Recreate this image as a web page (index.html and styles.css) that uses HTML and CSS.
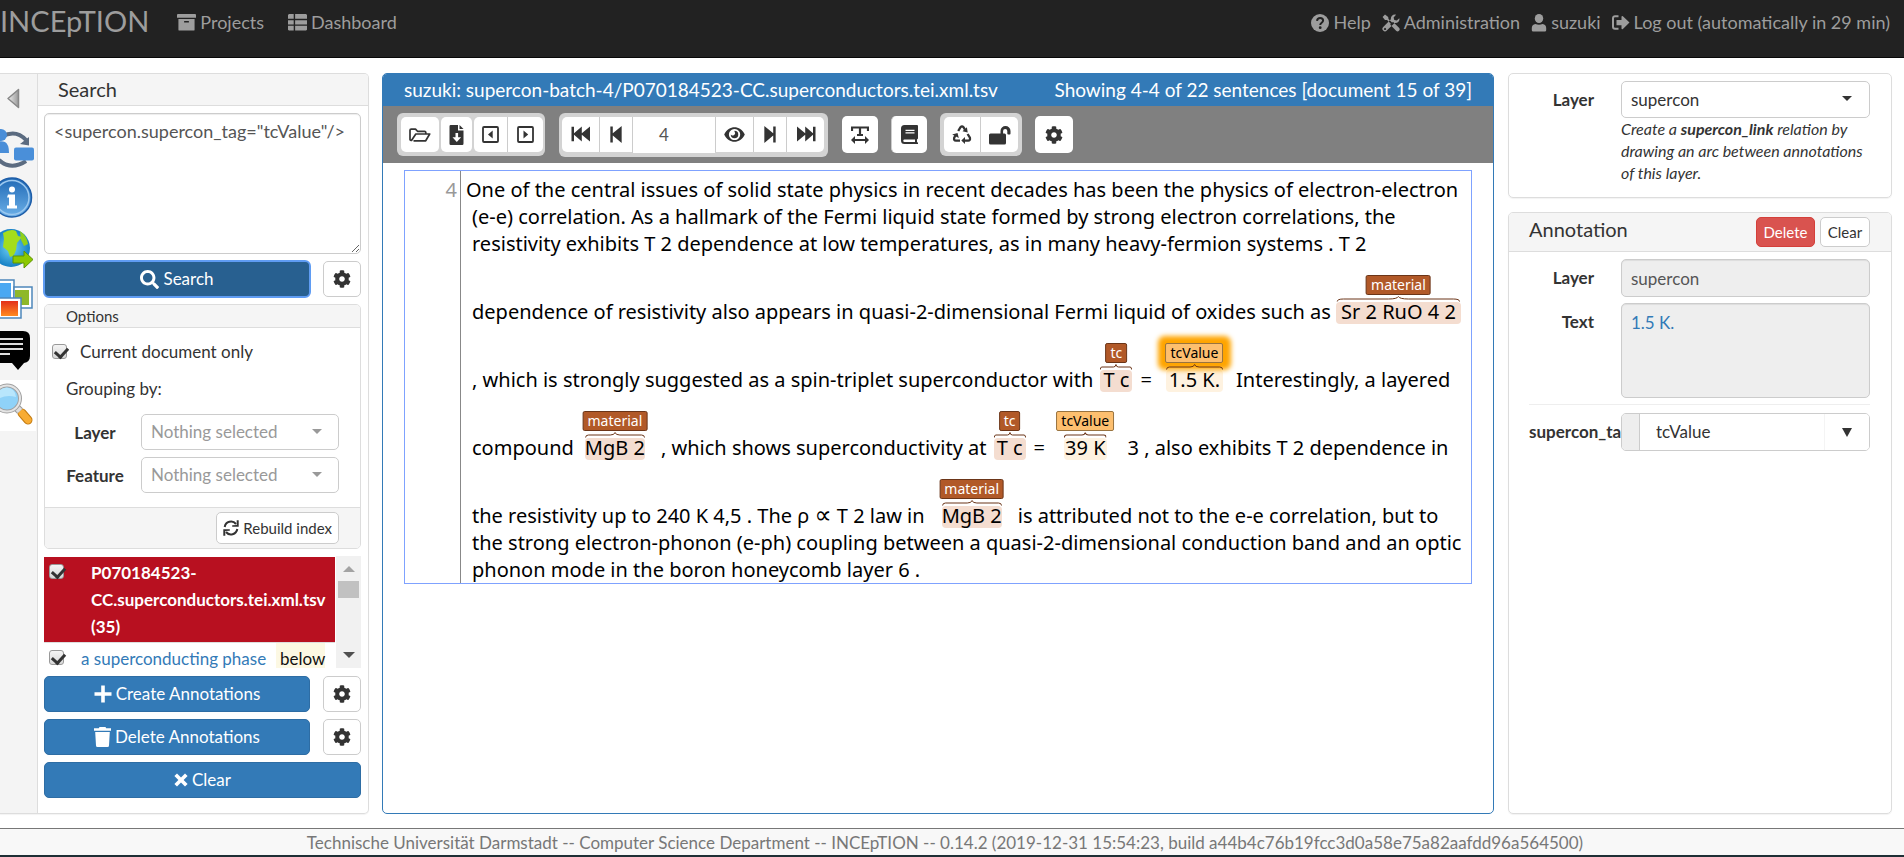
FILE: index.html
```html
<!DOCTYPE html>
<html lang="en">
<head>
<meta charset="utf-8">
<title>INCEpTION</title>
<link rel="stylesheet" href="styles.css">
</head>
<body>
<svg class="sprite" aria-hidden="true">
  <symbol id="cog" viewBox="0 0 512 512"><path d="M487.4 315.7l-42.6-24.6c4.3-23.2 4.3-47 0-70.2l42.6-24.6c4.9-2.8 7.1-8.6 5.5-14-11.1-35.6-30-67.8-54.7-94.6-3.8-4.1-10-5.1-14.8-2.3L380.8 110c-17.9-15.4-38.5-27.3-60.8-35.1V25.8c0-5.6-3.9-10.5-9.4-11.7-36.7-8.2-74.3-7.8-109.2 0-5.5 1.2-9.4 6.1-9.4 11.7V75c-22.2 7.9-42.8 19.8-60.8 35.1L88.7 85.5c-4.9-2.8-11-1.9-14.8 2.3-24.7 26.7-43.6 58.9-54.7 94.6-1.7 5.4.6 11.2 5.5 14L67.3 221c-4.3 23.2-4.3 47 0 70.2l-42.6 24.6c-4.9 2.8-7.1 8.6-5.5 14 11.1 35.6 30 67.8 54.7 94.6 3.8 4.1 10 5.1 14.8 2.3l42.6-24.6c17.9 15.4 38.5 27.3 60.8 35.1v49.2c0 5.6 3.9 10.5 9.4 11.7 36.7 8.2 74.3 7.8 109.2 0 5.5-1.2 9.4-6.1 9.4-11.7v-49.2c22.2-7.9 42.8-19.8 60.8-35.1l42.6 24.6c4.9 2.8 11 1.9 14.8-2.3 24.7-26.7 43.6-58.9 54.7-94.6 1.5-5.5-.7-11.3-5.6-14.1zM256 336c-44.1 0-80-35.9-80-80s35.9-80 80-80 80 35.9 80 80-35.9 80-80 80z"/></symbol>
  <symbol id="search" viewBox="0 0 512 512"><path d="M505 442.7L405.3 343c-4.5-4.5-10.6-7-17-7H372c27.6-35.3 44-79.7 44-128C416 93.1 322.9 0 208 0S0 93.1 0 208s93.1 208 208 208c48.3 0 92.7-16.4 128-44v16.3c0 6.4 2.5 12.5 7 17l99.7 99.7c9.4 9.4 24.6 9.4 33.9 0l28.3-28.3c9.4-9.4 9.4-24.6.1-34zM208 336c-70.7 0-128-57.2-128-128 0-70.7 57.2-128 128-128 70.7 0 128 57.2 128 128 0 70.7-57.2 128-128 128z"/></symbol>
  <symbol id="archive" viewBox="0 0 20 18"><path d="M1 0h18a1 1 0 0 1 1 1v3H0V1a1 1 0 0 1 1-1zM1.500 5.200h17V16.500a1 1 0 0 1-1 1h-15a1 1 0 0 1-1-1zM7.500 7.500v1.500h5V7.500z" fill-rule="evenodd"/></symbol>
  <symbol id="thlist" viewBox="0 0 20 18"><path d="M1 0h5v5H0V1zM7.500 0H19l1 1v4H7.500zM0 6.500h6v4.500H0zM7.500 6.500H20V11H7.500zM0 12.500h6v5H1l-1-1zM7.500 12.500H20v4l-1 1H7.500z"/></symbol>
  <symbol id="help" viewBox="0 0 18 18"><circle cx="9" cy="9" r="9"/><path d="M6 6.800C6.300 4.700 7.500 3.900 9.100 3.900c1.700 0 3 1.100 3 2.600 0 2.200-2.900 2.200-2.900 4.400" fill="none" stroke="#222" stroke-width="2"/><circle cx="9.200" cy="13.700" r="1.400" fill="#222"/></symbol>
  <symbol id="tools" viewBox="0 0 18 18"><path d="M3 .5l3.200 2.400.3 2L10 8.400l1.200-.5 5.800 5.900a1.800 1.800 0 0 1-2.900 2.900l-5.800-5.900.4-1.200L5 6.100 3 5.900.6 2.900zM17.300 4.300L14.800 6.600l-2.500-.7-.7-2.500 2.400-2.700c-3-.7-5.500 1.500-5.100 4.500L1.200 13a2.500 2.500 0 0 0 3.600 3.600L12.600 9c3 .5 5.500-1.900 4.700-4.700zM3 16a1 1 0 1 1 .1 0z" fill-rule="nonzero"/></symbol>
  <symbol id="user" viewBox="0 0 16 20"><ellipse cx="8" cy="5" rx="4.700" ry="5"/><path d="M4 11c2.500 1.200 5.500 1.200 8 0 2.500.3 4 2 4 4.500V18a1.500 1.500 0 0 1-1.500 1.500h-13A1.500 1.500 0 0 1 0 18v-2.500C0 13 1.500 11.300 4 11z"/></symbol>
  <symbol id="logout" viewBox="0 0 18 16"><path d="M6.500 1.200H3A2 2 0 0 0 1 3.200v8.600a2 2 0 0 0 2 2h3.500" fill="none" stroke="currentColor" stroke-width="2"/><path d="M4.500 5v5.200h5V13.500q.2 1.200 1.400.4L17.500 7.600 10.900 1.200Q9.700.5 9.500 1.700V5z"/></symbol>
  <symbol id="plus" viewBox="0 0 18 18"><path d="M7.200.5h3.600v6.700h6.700v3.600h-6.700v6.700H7.200v-6.700H.5V7.200h6.700z"/></symbol>
  <symbol id="trash" viewBox="0 0 17 20"><path d="M5.500 0h6l.7 1.300H17v2.500H0V1.300h4.800zM1.200 5h14.600l-.8 13.500a1.500 1.500 0 0 1-1.500 1.500h-10A1.500 1.500 0 0 1 2 18.500z"/></symbol>
  <symbol id="times" viewBox="0 0 14 14"><path d="M3 .4l4 4 4-4L13.600 3l-4 4 4 4-2.600 2.600-4-4-4 4L.4 11l4-4-4-4z"/></symbol>
  <symbol id="sync" viewBox="0 0 16 16"><path d="M1.700 7A6.400 6.400 0 0 1 13 4M14.300 9A6.400 6.400 0 0 1 3 12" fill="none" stroke="currentColor" stroke-width="2"/><path d="M15.700.3v6.500H9.200v-1.500L13.700 5V.3zM.3 15.700V9.200h6.500v1.500L2.300 11v4.700z"/></symbol>
  <symbol id="folder" viewBox="0 0 22 14"><path d="M4.500 12.800h12.200L20.700 6H6.800L2.500 12.500q-1.300 0-1.500-1V2.300Q1 1.100 2.200 1.100h4.300l2 2.200h7q1.300 0 1.300 1.300V6" fill="none" stroke="currentColor" stroke-width="1.700" stroke-linejoin="round"/></symbol>
  <symbol id="file" viewBox="0 0 14 20"><path d="M0 1.200Q0 0 1.200 0H8.500V5.500H14V18.500Q14 20 12.800 20H1.200Q0 20 0 18.700zM10 0l4 4h-4zM6 8v4.200H3L7.300 17l4.300-4.800h-3V8z" fill-rule="evenodd"/></symbol>
  <symbol id="prevdoc" viewBox="0 0 17 17"><rect x="1" y="1" width="15" height="15" rx="1" fill="none" stroke="currentColor" stroke-width="1.800"/><path d="M10.700 4.500v8L6 8.500z"/></symbol>
  <symbol id="nextdoc" viewBox="0 0 17 17"><rect x="1" y="1" width="15" height="15" rx="1" fill="none" stroke="currentColor" stroke-width="1.800"/><path d="M6.500 4.500v8l4.700-4z"/></symbol>
  <symbol id="first" viewBox="0 0 20 16"><path d="M.5.800H3v6.500L10.800.5v6.800L19 .5v15l-8.200-6.800v6.800L3 8.700v6.500H.5z"/></symbol>
  <symbol id="last" viewBox="0 0 20 16"><path d="M19.500.800H17v6.500L9.200.5v6.800L1 .5v15l8.200-6.800v6.800L17 8.700v6.500h2.500z"/></symbol>
  <symbol id="prev" viewBox="0 0 12 18"><path d="M0 .5h2.600v7.300L12 0v18L2.600 10v7.500H0z"/></symbol>
  <symbol id="next" viewBox="0 0 12 18"><path d="M12 .5H9.400v7.300L0 0v18l9.400-8v7.500H12z"/></symbol>
  <symbol id="eye" viewBox="0 0 22 16"><path d="M0 8C5-2.300 17-2.300 22 8 17 18.300 5 18.300 0 8zM11 2a6 6 0 1 0 .1 0zM11 4a4 4 0 1 1-4 4 2 2 0 0 0 4-3z" fill-rule="evenodd"/></symbol>
  <symbol id="textw" viewBox="0 0 18 18"><path d="M1 5V1.500h16V5M9 1.500v7.300M6 9h6" fill="none" stroke="currentColor" stroke-width="2.200"/><path d="M0 14l4-4v3h10v-3l4 4-4 4v-3H4v3z"/></symbol>
  <symbol id="book" viewBox="0 0 17 19"><path d="M3.500 0H16a1 1 0 0 1 1 1v12.500l-1 1V17l1 .7V19H3.500A3.500 3.500 0 0 1 0 15.500v-12A3.500 3.500 0 0 1 3.500 0zM4.500 4.700V6h9V4.700zM4.500 7.300v1.300h9V7.300zM3.500 14.500a1.100 1.100 0 0 0 0 2.500H14v-2.500z" fill-rule="evenodd"/></symbol>
  <symbol id="recycle" viewBox="0 0 20 19"><path d="M6.200 6L8.500 2.200Q10 .500 11.500 2.200L13 4.800M15.600 9l2.300 3.700Q18.600 15.500 16 15.700H12.500M8 15.700H4Q1.500 15.500 2.200 12.700L3.800 10" fill="none" stroke="currentColor" stroke-width="2.300"/><path d="M14.900 2.200l.8 5.300-5.200-1.200zM13 11.900v7.100L9.300 15.500zM.2 9.500L5.500 8l1.300 5z"/></symbol>
  <symbol id="unlock" viewBox="0 0 22 20"><path d="M2 8.500h9.500V6a5 5 0 0 1 10 0v2.500a1 1 0 0 1-1.200 1h-1a1 1 0 0 1-1-1V6a2.100 2.100 0 0 0-4.200 0V8.500h1.400a1.500 1.500 0 0 1 1.500 1.500v8a1.500 1.500 0 0 1-1.500 1.500H1.500A1.500 1.500 0 0 1 0 18v-8a1.500 1.500 0 0 1 1.500-1.500z"/></symbol>
  <symbol id="brace" viewBox="0 0 100 6" preserveAspectRatio="none"><path d="M1 5.500Q1 3 6 3H42Q49 3 50 .5 51 3 58 3H94Q99 3 99 5.500" fill="none" stroke="currentColor" stroke-width="1" vector-effect="non-scaling-stroke"/></symbol>
</svg>

<nav class="navbar">
  <a class="brand" href="#">INCEpTION</a>
  <a class="nav-link" href="#"><svg class="i20"><use href="#archive"/></svg>Projects</a>
  <a class="nav-link second" href="#"><svg class="i20"><use href="#thlist"/></svg>Dashboard</a>
  <div class="nav-right">
    <a class="nav-link" href="#"><svg class="i18"><use href="#help"/></svg>Help</a>
    <a class="nav-link" href="#"><svg class="i18"><use href="#tools"/></svg>Administration</a>
    <a class="nav-link" href="#"><svg class="i16"><use href="#user"/></svg>suzuki</a>
    <a class="nav-link" href="#"><svg class="i18"><use href="#logout"/></svg>Log out (automatically in 29 min)</a>
  </div>
</nav>

<main class="main">
  <aside class="sidebar">
    <div class="tabs">
      <button class="tab" aria-label="Collapse"><svg width="38" height="50" viewBox="0 0 38 50"><defs><linearGradient id="gg"><stop offset="0" stop-color="#eee"/><stop offset="1" stop-color="#999"/></linearGradient></defs><path d="M8 24.500L18.500 15.500v18z" fill="url(#gg)" stroke="#888" stroke-width="1.500" stroke-linejoin="round"/></svg></button>
      <button class="tab" aria-label="Curation"><svg width="38" height="51" viewBox="0 0 38 51"><path d="M2 11.500Q16 4 26 15M-1 35Q11 46 26 36" fill="none" stroke="#5b6b80" stroke-width="4"/><path d="M29 12v8.500l-9-1.500z" fill="#5b6b80"/><circle cx="1" cy="10" r="6" fill="#4a8ed8"/><path d="M-4 28V18q4-3 9-1 4 2 4 11z" fill="#4a8ed8"/><rect x="14" y="22.500" width="20" height="13" rx="2" fill="#4a8fd9"/></svg></button>
      <button class="tab" aria-label="Info"><svg width="38" height="51" viewBox="0 0 38 51"><defs><linearGradient id="bg" x2="0" y2="1"><stop offset="0" stop-color="#2069b5"/><stop offset="1" stop-color="#6cb0e8"/></linearGradient></defs><circle cx="12" cy="21.500" r="19.500" fill="url(#bg)" stroke="#1d5da8" stroke-width="1.500"/><circle cx="12" cy="21.500" r="17" fill="none" stroke="#9cc8ef" stroke-width="1.500"/><circle cx="12" cy="13.500" r="3" fill="#fff"/><path d="M8 18.500h7v11h2v3H7v-3h2v-8H7z" fill="#fff"/></svg></button>
      <button class="tab" aria-label="Web"><svg width="38" height="51" viewBox="0 0 38 51"><defs><radialGradient id="gl"><stop offset="0" stop-color="#6fd0f5"/><stop offset="1" stop-color="#1680c5"/></radialGradient></defs><circle cx="11" cy="21" r="19" fill="url(#gl)"/><path d="M3 6q8-5 13-2l2 5 4 1-5 6-1 7q-2 7-6 7l-2-6-5-4 1-8z" fill="#a4dd1c"/><path d="M20 4q7 5 8 13l-4 2-3-6z" fill="#8fd01a"/><path d="M13 29h11v-5l9 8.500-9 8.500v-5H13z" fill="#8cc800" stroke="#5e9400"/></svg></button>
      <button class="tab" aria-label="Images"><svg width="38" height="51" viewBox="0 0 38 51"><defs><linearGradient id="rd" x2="0" y2="1"><stop offset="0" stop-color="#e33018"/><stop offset="1" stop-color="#ff8a20"/></linearGradient></defs><g stroke="#4d87bb" stroke-width="1.500"><path d="M-8 2h22v22H-8z" fill="#fff"/><path d="M14 9h18v21H14z" fill="#fff"/></g><path d="M-5 5h16v16H-5z" fill="#4aa8f2"/><path d="M15 12h14v15H15z" fill="#8eb82a"/><path d="M-3 20h24v20H-3z" fill="#fff" stroke="#4d87bb" stroke-width="1.500"/><path d="M1 23h17v15H1z" fill="url(#rd)"/></svg></button>
      <button class="tab" aria-label="Comments"><svg width="38" height="51" viewBox="0 0 38 51"><path d="M-3 2h26q7 0 7 7v18q0 6-6 7l-6 7-6-7H-3z" fill="#000"/><path d="M0 10h23M0 15h23M0 20h23M0 25h10" stroke="#ddd" stroke-width="2"/></svg></button>
      <button class="tab active" aria-label="Search"><svg width="38" height="51" viewBox="0 0 38 51"><path d="M22 33l6 7" stroke="#c27a10" stroke-width="9" stroke-linecap="round"/><path d="M22 33l6 7" stroke="#f8ac33" stroke-width="7" stroke-linecap="round"/><path d="M15 26l5 5" stroke="#999" stroke-width="8"/><path d="M15 26l5 5" stroke="#ddd" stroke-width="6"/><circle cx="7" cy="18.500" r="13" fill="#8fd2f8" stroke="#a0a0a0" stroke-width="4"/><circle cx="7" cy="18.500" r="13" fill="none" stroke="#e4e4e4" stroke-width="2"/><path d="M-3 20q8-6 19-3a9.500 9.500 0 0 0-19 0z" fill="#b8e6fc"/></svg></button>
    </div>
    <section class="search-panel">
      <h2 class="panel-head">Search</h2>
      <div class="search-body">
        <textarea class="query" aria-label="Query">&lt;supercon.supercon_tag="tcValue"/&gt;</textarea>
        <div class="row"><button class="btn primary focus"><svg class="i20"><use href="#search"/></svg>Search</button><button class="btn gear" aria-label="Search settings"><svg class="i18"><use href="#cog"/></svg></button></div>
        <div class="options">
          <h3 class="options-head">Options</h3>
          <div class="options-body">
            <label class="check-label"><input type="checkbox" class="check" checked><span>Current document only</span></label>
            <p class="grouping">Grouping by:</p>
            <div class="opt-row"><label for="g-layer">Layer</label><div class="select-wrap muted"><select id="g-layer"><option>Nothing selected</option></select></div></div>
            <div class="opt-row"><label for="g-feature">Feature</label><div class="select-wrap muted"><select id="g-feature"><option>Nothing selected</option></select></div></div>
          </div>
          <div class="options-foot"><button class="btn small"><svg class="i16"><use href="#sync"/></svg>Rebuild index</button></div>
        </div>
        <div class="results">
          <div class="results-list">
            <label class="result-doc"><input type="checkbox" class="check" checked><span>P070184523-CC.superconductors.tei.xml.tsv (35)</span></label>
            <div class="result"><input type="checkbox" class="check" aria-label="Select result" checked><a href="#">a superconducting phase</a><mark>below</mark></div>
          </div>
          <div class="scrollbar" aria-hidden="true"><i class="up"></i><i class="thumb"></i><i class="down"></i></div>
        </div>
        <div class="row"><button class="btn primary"><svg class="i18"><use href="#plus"/></svg>Create Annotations</button><button class="btn gear" aria-label="Create settings"><svg class="i18"><use href="#cog"/></svg></button></div>
        <div class="row"><button class="btn primary"><svg class="trash"><use href="#trash"/></svg>Delete Annotations</button><button class="btn gear" aria-label="Delete settings"><svg class="i18"><use href="#cog"/></svg></button></div>
        <div class="row"><button class="btn primary"><svg class="i14"><use href="#times"/></svg>Clear</button></div>
      </div>
    </section>
  </aside>

  <section class="doc-panel">
    <h1 class="doc-head"><span>suzuki: supercon-batch-4/P070184523-CC.superconductors.tei.xml.tsv</span><span>Showing 4-4 of 22 sentences [document 15 of 39]</span></h1>
    <div class="toolbar">
      <div class="group docs"><button class="tb w38" aria-label="Open"><svg width="22" height="14"><use href="#folder"/></svg></button><button class="tb w31" aria-label="Export"><svg width="15" height="20"><use href="#file"/></svg></button><span class="pair"><button class="tb" aria-label="Previous document"><svg width="17" height="17"><use href="#prevdoc"/></svg></button><button class="tb" aria-label="Next document"><svg width="17" height="17"><use href="#nextdoc"/></svg></button></span></div>
      <div class="group pages"><button class="tb" aria-label="First"><svg width="20" height="16"><use href="#first"/></svg></button><button class="tb" aria-label="Previous"><svg width="12" height="17"><use href="#prev"/></svg></button><input class="page" aria-label="Sentence" value="4"><button class="tb w38" aria-label="Go to"><svg width="21" height="15"><use href="#eye"/></svg></button><button class="tb" aria-label="Next"><svg width="12" height="17"><use href="#next"/></svg></button><button class="tb" aria-label="Last"><svg width="20" height="16"><use href="#last"/></svg></button></div>
      <button class="tb single" aria-label="Text direction"><svg width="18" height="18"><use href="#textw"/></svg></button>
      <button class="tb single" aria-label="Guidelines"><svg width="17" height="19"><use href="#book"/></svg></button>
      <div class="group tail"><button class="tb w36" aria-label="Reset"><svg width="20" height="19"><use href="#recycle"/></svg></button><button class="tb w38" aria-label="Finish"><svg width="22" height="20"><use href="#unlock"/></svg></button></div>
      <button class="tb single w38" aria-label="Settings"><svg class="i18"><use href="#cog"/></svg></button>
    </div>
    <div class="brat">
      <div class="gutter">4</div>
      <div class="text">
        <p class="line start">One of the central issues of solid state physics in recent decades has been the physics of electron-electron</p>
        <p class="line">(e-e) correlation. As a hallmark of the Fermi liquid state formed by strong electron correlations, the</p>
        <p class="line">resistivity exhibits T 2 dependence at low temperatures, as in many heavy-fermion systems . T 2</p>
        <p class="line tall">dependence of resistivity also appears in quasi-2-dimensional Fermi liquid of oxides such as <span class="ann formula">Sr 2 RuO 4 2<b>material</b><svg><use href="#brace"/></svg></span></p>
        <p class="line tall">, which is strongly suggested as a spin-triplet superconductor with <span class="ann tc">T c<b>tc</b><svg><use href="#brace"/></svg></span><span class="eq">=</span><span class="ann val sel">1.5 K.<b>tcValue</b><svg><use href="#brace"/></svg></span><span class="after">Interestingly, a layered</span></p>
        <p class="line tall">compound<span class="ann wide">MgB 2<b>material</b><svg><use href="#brace"/></svg></span>, which shows superconductivity at <span class="ann tc">T c<b>tc</b><svg><use href="#brace"/></svg></span><span class="eq">=</span><span class="ann val lone">39 K<b>tcValue</b><svg><use href="#brace"/></svg></span>3 , also exhibits T 2 dependence in</p>
        <p class="line tall">the resistivity up to 240 K 4,5 . The ρ <span class="prop">∝</span> T 2 law in<span class="ann wide spaced">MgB 2<b>material</b><svg><use href="#brace"/></svg></span>is attributed not to the e-e correlation, but to</p>
        <p class="line">the strong electron-phonon (e-ph) coupling between a quasi-2-dimensional conduction band and an optic</p>
        <p class="line">phonon mode in the boron honeycomb layer 6 .</p>
      </div>
    </div>
  </section>

  <aside class="right">
    <section class="card layer-card">
      <div class="form-row"><label for="layer">Layer</label><div class="field"><div class="select-wrap"><select id="layer"><option>supercon</option></select></div><p class="hint">Create a <strong>supercon_link</strong> relation by drawing an arc between annotations of this layer.</p></div></div>
    </section>
    <section class="card ann-card">
      <div class="ann-head"><h2>Annotation</h2><button class="btn danger">Delete</button><button class="btn tiny">Clear</button></div>
      <div class="form">
        <div class="form-row"><label for="a-layer">Layer</label><div class="field"><input class="readonly" id="a-layer" value="supercon" readonly></div></div>
        <div class="form-row"><label for="a-text">Text</label><div class="field"><textarea class="readonly textbox" id="a-text" readonly>1.5 K.</textarea></div></div>
        <hr>
        <div class="form-row"><label class="clip" for="tag">supercon_tag</label><div class="field combo"><span class="addon"></span><input id="tag" value="tcValue"><button aria-label="Show values"><i></i></button></div></div>
      </div>
    </section>
  </aside>
</main>
<footer class="footer">Technische Universität Darmstadt -- Computer Science Department -- INCEpTION -- 0.14.2 (2019-12-31 15:54:23, build a44b4c76b19fcc3d0a58e75a82aafdd96a564500)</footer>
</body>
</html>
```

FILE: styles.css
```css
* { box-sizing: border-box; }
body { margin: 0; min-height: 100vh; display: flex; flex-direction: column; background: #fff; color: #333; font: 17px/27px Lato, sans-serif; }
h1, h2, h3, p { margin: 0; font-weight: 400; }
button, input, select, textarea { font: inherit; color: inherit; margin: 0; }
a { color: #337ab7; text-decoration: none; }
svg { flex: none; fill: currentColor; }
.sprite { display: none; }
.i14 { width: 14px; height: 14px; }
.i16 { width: 16px; height: 18px; }
.i18 { width: 18px; height: 18px; }
.i20 { width: 19px; height: 19px; }
.trash { width: 17px; height: 20px; }

.navbar { flex: none; height: 58px; background: #222; border-bottom: 1px solid #080808; display: flex; align-items: flex-start; padding: 0 14px 0 0; color: #9d9d9d; }
.brand { color: inherit; font-size: 29px; line-height: 42px; margin-right: 28px; }
.nav-link { color: inherit; display: flex; align-items: center; gap: 4px; font-size: 18px; line-height: 45px; white-space: nowrap; }
.nav-link.second { margin-left: 24px; }
.nav-right { margin-left: auto; display: flex; gap: 11px; }

.main { flex: 1; display: flex; padding: 15px 12px 14px 0; }
.sidebar { width: 369px; flex: none; display: flex; border: 1px solid #ddd; border-left: 0; border-radius: 0 5px 5px 0; box-shadow: 0 1px 1px rgba(0,0,0,.05); }
.tabs { width: 38px; flex: none; background: #f4f4f4; border-right: 1px solid #ddd; display: flex; flex-direction: column; }
.tab { border: 0; padding: 0; background: none; height: 51px; overflow: hidden; display: flex; }
.tab.active { background: #fff; width: 36px; }
.search-panel { flex: 1; min-width: 0; }
.panel-head { background: #f5f5f5; border-bottom: 1px solid #ddd; height: 32px; line-height: 31px; font-size: 20px; padding-left: 20px; border-radius: 0 4px 0 0; }
.search-body { padding: 7px 7px 0 6px; display: flex; flex-direction: column; }
.query { display: block; height: 141px; border: 1px solid #ccc; border-radius: 5px; padding: 4px 9px; font-size: 18px; line-height: 26px; color: #555; box-shadow: inset 0 1px 1px rgba(0,0,0,.075); resize: vertical; outline: 0; margin-bottom: 7px; overflow: hidden; white-space: pre; }
.row { display: flex; gap: 13px; margin-bottom: 7px; }
.btn { height: 36px; border: 1px solid #ccc; border-radius: 5px; background: #fff; padding: 0; display: flex; justify-content: center; align-items: center; gap: 4px; line-height: 24px; white-space: nowrap; }
.btn.primary { flex: 1; background: #337ab7; border-color: #2e6da4; color: #fff; }
.btn.focus { background: #286090; border-color: #204d74; outline: 2px solid #5f9cf3; outline-offset: -1px; }
.btn.gear { width: 38px; flex: none; }
.btn.small { height: 32px; font-size: 15px; padding: 0 6px; gap: 4px; }
.options { border: 1px solid #ddd; border-radius: 5px; margin-bottom: 7px; overflow: hidden; }
.options-head { background: #f5f5f5; border-bottom: 1px solid #ddd; font-size: 15px; line-height: 22px; padding-left: 21px; }
.options-body { padding: 8px 21px 0 7px; height: 179px; }
.check-label { display: flex; align-items: center; gap: 13px; height: 30px; }
.check { appearance: none; width: 15px; height: 15px; flex: none; border: 1px solid #999; border-radius: 3px; background: linear-gradient(#f4f4f4, #d8d8d8); position: relative; }
.check:checked::after { content: ""; position: absolute; left: 4px; top: 0; width: 6px; height: 10px; border: solid #333; border-width: 0 3px 3px 0; transform: rotate(42deg); }
.grouping { padding-left: 14px; line-height: 42px; margin: 2px 0 4px; }
.opt-row { display: flex; align-items: center; margin-bottom: 7px; }
.opt-row label { width: 86px; flex: none; margin-right: 3px; text-align: center; font-weight: 700; }
.select-wrap { position: relative; flex: 1; min-width: 0; }
.select-wrap select { appearance: none; display: block; width: 100%; height: 37px; background: #fff; border: 1px solid #ccc; border-radius: 5px; padding: 0 9px 1px; }
.select-wrap::after { content: ""; position: absolute; right: 18px; top: 15px; border: 5px solid transparent; border-top-color: #333; border-bottom: 0; }
.select-wrap.muted select { height: 36px; color: #999; }
.select-wrap.muted::after { border-top-color: #999; right: 17px; }
.options-foot { background: #f5f5f5; border-top: 1px solid #ddd; height: 41px; padding: 4px 21px; display: flex; justify-content: flex-end; }
.results { display: flex; height: 112px; margin-bottom: 8px; overflow: hidden; }
.results-list { flex: 1; min-width: 0; }
.result-doc { display: flex; background: #b81020; color: #fff; font-weight: 700; height: 86px; padding: 2px 0 0 5px; margin-top: 1px; border-bottom: 1px solid #ddd; }
.result-doc .check { margin-top: 5px; margin-right: 27px; }
.result-doc span { overflow-wrap: break-word; flex: 1; min-width: 0; }
.result { display: flex; align-items: flex-start; padding-left: 5px; white-space: nowrap; }
.result .check { margin: 7px 17px 0 0; }
.result a { padding-top: 2px; width: 195px; }
.result mark { background: #fcf8e3; color: #111; padding: 2px 0 0 4px; }
.scrollbar { width: 25px; margin-left: 1px; background: #f1f1f1; display: flex; flex-direction: column; align-items: center; }
.scrollbar .up { margin-top: 10px; border: 6px solid transparent; border-bottom-color: #a3a3a3; border-top: 0; }
.scrollbar .thumb { margin-top: 9px; width: 21px; height: 17px; background: #c1c1c1; }
.scrollbar .down { margin: auto 0 10px; border: 6px solid transparent; border-top-color: #505050; border-bottom: 0; }

.doc-panel { flex: 1; min-width: 0; margin: 0 14px 0 13px; border: 1px solid #337ab7; border-radius: 5px; display: flex; flex-direction: column; }
.doc-head { background: #337ab7; color: #fff; font-size: 19px; line-height: 32px; padding: 0 21px; display: flex; justify-content: space-between; white-space: nowrap; border-radius: 4px 4px 0 0; }
.toolbar { height: 57px; background: #808080; padding: 0 14px; display: flex; align-items: center; }
.group { background: #d3d3d3; border-radius: 6px; padding: 4px; display: flex; margin-right: 14px; height: 43px; }
.tb { border: 0; border-radius: 0; padding: 0; height: 35px; background: #fff; display: flex; justify-content: center; align-items: center; width: 33px; }
.tb + .tb, .page + .tb, .tb + .page { border-left: 1px solid #ccc; }
.docs { gap: 2px; padding: 4px 2px 4px 4px; }
.docs .tb { border-radius: 5px; border-left: 0; }
.pair { display: flex; }
.docs .pair .tb:first-child { border-radius: 5px 0 0 5px; }
.docs .pair .tb:last-child { border-radius: 0 5px 5px 0; border-left: 1px solid #ccc; width: 36px; }
.group > .tb:first-child { border-radius: 5px 0 0 5px; }
.group > .tb:last-child { border-radius: 0 5px 5px 0; }
.docs > .tb:first-child { border-radius: 5px; }
.pages { height: 44px; padding: 4px 4px 4px 3px; }
.pages .tb:first-child { width: 37px; }
.pages .tb:last-child { width: 38px; }
.page { width: 83px; height: 36px; border: 0; border-radius: 0; text-align: center; padding: 0 20px 0 0; color: #555; }
.tb.single { border-radius: 5px; margin-right: 13px; width: 36px; height: 37px; }
.tb.w31 { width: 31px; }
.tb.w36 { width: 36px; }
.tb.w38 { width: 38px; }
.tail { margin-right: 13px; }
.brat { margin: 7px 21px; border: 1px solid #7fa2ff; display: flex; color: #000; font-family: "Noto Sans", sans-serif; font-size: 20px; line-height: 27px; }
.gutter { width: 56px; flex: none; border-right: 1px solid #888; text-align: right; padding: 5px 3px 0 0; color: #999; }
.text { padding: 5px 0 0 11px; min-width: 0; }
.line { white-space: nowrap; height: 27px; }
.line.start { margin-left: -6px; }
.line.tall { height: 68px; padding-top: 41px; }
.ann { position: relative; display: inline-block; height: 22px; line-height: 20px; background: #f4ddd0; border-radius: 4px; color: #000; }
.ann b { position: absolute; left: 50%; bottom: 29px; transform: translateX(-50%); font-weight: 400; font-size: 14px; line-height: 18px; padding: 0 4px; border: 1px solid #6b3518; border-radius: 2px; background: #b15928; color: #fff; }
.ann svg { position: absolute; left: 0; bottom: 22px; width: 100%; height: 6px; color: #6b3518; }
.ann.formula { padding: 0 5px; }
.ann.tc { padding: 0 3px; margin-left: 2px; }
.ann.val { background: #fef2e0; }
.ann.val b { background: #fdbf6f; border-color: #98733f; color: #000; }
.ann.sel { padding: 0 3px; }
.ann.sel b { box-shadow: 0 0 5px 7px #ffa500; }
.ann.wide { margin: 0 16px 0 11px; }
.ann.wide.spaced { margin-left: 17px; }
.ann.lone { padding: 0 1px; margin: 0 21px 0 5px; }
.eq { margin: 0 14px 0 8px; }
.after { margin-left: 13px; }
.prop { font-family: "DejaVu Sans", sans-serif; font-size: 24px; line-height: 20px; }

.right { width: 384px; flex: none; display: flex; flex-direction: column; gap: 14px; }
.card { border: 1px solid #ddd; border-radius: 5px; box-shadow: 0 1px 1px rgba(0,0,0,.05); padding: 7px 21px 0 20px; }
.layer-card { height: 125px; }
.ann-card { flex: 1; padding: 0; }
.form-row { display: flex; margin-bottom: 6px; }
.form-row > label { width: 92px; flex: none; text-align: right; padding-right: 27px; line-height: 37px; font-weight: 700; }
.form-row > .clip { padding: 0; text-align: left; overflow: hidden; }
.field { flex: 1; min-width: 0; }
.hint { font-size: 16px; line-height: 22px; font-style: italic; }
.ann-head { height: 39px; background: #f5f5f5; border-bottom: 1px solid #ddd; border-radius: 4px 4px 0 0; padding: 4px 21px 0 20px; display: flex; gap: 5px; }
.ann-head h2 { font-size: 20px; line-height: 25px; margin-right: auto; }
.ann-head .btn { height: 30px; font-size: 15px; width: 50px; }
.ann-head .btn.danger { width: 59px; background: #d9534f; border-color: #d43f3a; color: #fff; }
.form { padding: 7px 21px 0 20px; }
.readonly { display: block; width: 100%; height: 38px; border: 1px solid #ccc; border-radius: 5px; background: #eee; color: #555; padding: 0 9px; box-shadow: inset 0 1px 1px rgba(0,0,0,.075); outline: 0; resize: none; }
.textbox { height: 95px; padding-top: 5px; color: #337ab7; }
.form hr { border: 0; border-top: 1px solid #eee; margin: 0 0 8px; }
.combo { display: flex; height: 38px; border: 1px solid #ccc; border-radius: 5px; overflow: hidden; }
.addon { width: 18px; flex: none; background: #eee; border-right: 1px solid #ccc; }
.combo input { flex: 1; min-width: 0; border: 0; padding: 0 16px 1px; outline: 0; }
.combo button { width: 45px; border: 0; border-left: 1px solid #f4f4f4; background: #fff; padding: 0; display: flex; justify-content: center; align-items: center; }
.combo i { border: 5px solid transparent; border-top: 9px solid #333; border-bottom: 0; }

.footer { flex: none; height: 29px; border-top: 1px solid #777; border-bottom: 2px solid #1f2f35; background: #f8f8f8; color: #777; text-align: center; line-height: 27px; white-space: nowrap; padding-right: 14px; }
```
